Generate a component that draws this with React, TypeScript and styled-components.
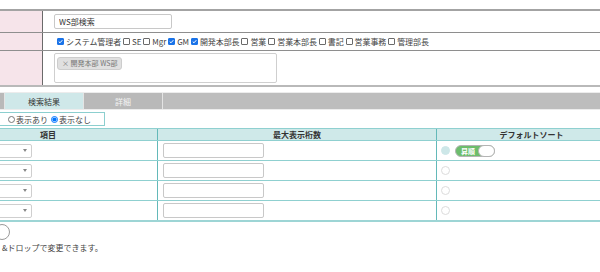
import React from 'react';
import styled, { createGlobalStyle } from 'styled-components';

const GlobalStyle = createGlobalStyle`
  html, body {
    margin: 0;
    padding: 0;
    background: #fff;
    overflow: hidden;
  }
  body {
    font-family: "Noto Sans CJK JP", "Noto Sans", sans-serif;
    font-size: 8px;
    color: #333;
  }
`

// the screenshot is scrolled sideways, so the page starts left of the window
const Canvas = styled.div`
    width: 687px;
    margin-left: -61px;
    padding-top: 9px;
`

const FormTable = styled.div`
    border-top: 2px solid #a3a3a3;
    border-bottom: 2px solid #b9b9b9;
`
const FormRow = styled.div<{ $h: number }>`
    display: grid;
    grid-template-columns: 104px 1fr;
    height: ${({ $h }) => $h}px;

    & + & {
        border-top: 1px solid #8e8e8e;
    }
`
const FormLabel = styled.div`
    background: #f6e4ea;
    border-right: 1px solid #6a6a6a;
`
const FormValue = styled.div`
    display: flex;
    align-items: center;
    padding-left: 11px;
`
const TextInput = styled.input<{ $w: number }>`
    box-sizing: border-box;
    width: ${({ $w }) => $w}px;
    height: 15px;
    border: 1px solid #c8c8c8;
    border-radius: 2px;
    padding: 0 4px;
    font: inherit;
    font-size: 8px;
    color: #333;
    background: #fff;
    outline: none;
`
const CheckList = styled.div`
    display: flex;
    align-items: center;
    padding-left: 3px;
    gap: 2px;
    line-height: 10px;
    letter-spacing: -0.1px;
`
const CheckItem = styled.span`
    display: inline-flex;
    align-items: center;
    gap: 2px;
    color: #444;
`
const CheckBox = styled.span<{ $on?: boolean }>`
    box-sizing: border-box;
    width: 7px;
    height: 7px;
    border-radius: 1px;
    border: 1px solid ${({ $on }) => ($on ? '#1a73e8' : '#6a6a6a')};
    background: ${({ $on }) => ($on ? '#1a73e8' : '#fff')};
    display: inline-flex;
    align-items: center;
    justify-content: center;

    svg {
        display: block;
    }
`
const TagBox = styled.div`
    box-sizing: border-box;
    width: 223px;
    height: 30px;
    border: 1px solid #cfcfcf;
    border-radius: 2px;
    padding: 3px 2px;
    align-self: center;
`
const Tag = styled.span`
    display: inline-block;
    height: 11px;
    line-height: 11px;
    padding: 0 4px;
    background: #e0e0e0;
    border: 1px solid #cdcdcd;
    border-radius: 3px;
    font-size: 7px;
    color: #777;
`

const TabBar = styled.div`
    display: flex;
    height: 16px;
    margin-top: 5px;
    background: #bdbdbd;
    border-top: 1px solid #ececec;
    border-bottom: 1px solid #ececec;
`
const Tab = styled.div<{ $active?: boolean; $w: number }>`
    width: ${({ $w }) => $w}px;
    border-right: 1px solid #e4e4e4;
    display: flex;
    align-items: center;
    justify-content: center;
    background: ${({ $active }) => ($active ? '#cfe8e9' : '#b9b9b9')};
    color: ${({ $active }) => ($active ? '#333' : '#f4f4f4')};
`

const RadioBox = styled.div`
    box-sizing: border-box;
    width: 166px;
    height: 14px;
    margin-top: 2px;
    padding-left: 68px;
    border: 1px solid #8ccfcf;
    display: flex;
    align-items: center;
    gap: 3px;
    color: #444;

    label {
        display: inline-flex;
        align-items: center;
        gap: 1px;
    }
    input {
        width: 7px;
        height: 7px;
        margin: 0;
    }
`

const Grid = styled.div`
    margin-top: 2px;
    border-top: 1px solid #8fd0d0;
    border-bottom: 2px solid #9dd5d5;
`
const GridRow = styled.div<{ $head?: boolean }>`
    display: grid;
    grid-template-columns: 218px 279px 1fr;
    height: ${({ $head }) => ($head ? 11 : 19)}px;
    background: ${({ $head }) => ($head ? '#cfe9e9' : '#fff')};
    font-weight: ${({ $head }) => ($head ? 'bold' : 'normal')};
    border-bottom: 1px solid #8fd0d0;

    &:last-child {
        border-bottom: none;
    }
`
const Cell = styled.div<{ $center?: boolean; $pad?: number }>`
    display: flex;
    align-items: center;
    justify-content: ${({ $center }) => ($center ? 'center' : 'flex-start')};
    padding-left: ${({ $pad }) => $pad || 0}px;
    gap: 5px;

    & + & {
        border-left: 1px solid #63b9b9;
    }
`
const SelectBox = styled.div`
    box-sizing: border-box;
    width: 85px;
    height: 14px;
    border: 1px solid #cfcfcf;
    border-radius: 2px;
    display: flex;
    align-items: center;
    justify-content: flex-end;
    padding-right: 4px;

    &::after {
        content: '';
        border-left: 2.5px solid transparent;
        border-right: 2.5px solid transparent;
        border-top: 3px solid #888;
    }
`
const SortRadio = styled.span<{ $on?: boolean }>`
    box-sizing: border-box;
    width: 9px;
    height: 9px;
    border-radius: 50%;
    background: ${({ $on }) => ($on ? '#cde7e8' : '#fff')};
    border: 1px solid ${({ $on }) => ($on ? '#cde7e8' : '#dcdcdc')};
`
const Toggle = styled.span`
    box-sizing: border-box;
    width: 40px;
    height: 12px;
    border-radius: 6px;
    border: 1px solid #b4b4b4;
    background: #6cbd6c;
    display: flex;
    align-items: center;
    color: #fff;
    font-size: 7px;
    font-weight: bold;
    padding-left: 5px;
    position: relative;

    &::after {
        content: '';
        position: absolute;
        right: -1px;
        top: -1px;
        width: 17px;
        height: 12px;
        box-sizing: border-box;
        border-radius: 6px;
        border: 1px solid #b4b4b4;
        background: #fff;
    }
`

const AddCircle = styled.div`
    width: 16px;
    height: 16px;
    box-sizing: border-box;
    margin: 2px 0 0 55px;
    border: 1.5px solid #9a9a9a;
    border-radius: 50%;
`
const Note = styled.div`
    margin-top: 3px;
    padding-left: 63px;
    line-height: 10px;
    color: #444;
`

const roles = [
    { name: 'システム管理者', on: true },
    { name: 'SE', on: false },
    { name: 'Mgr', on: false },
    { name: 'GM', on: true },
    { name: '開発本部長', on: true },
    { name: '営業', on: false },
    { name: '営業本部長', on: false },
    { name: '書記', on: false },
    { name: '営業事務', on: false },
    { name: '管理部長', on: false },
]

function App() {
    return (
        <>
            <GlobalStyle />
            <Canvas>
                <FormTable>
                    <FormRow $h={21}>
                        <FormLabel />
                        <FormValue>
                            <TextInput $w={118} defaultValue="WS部検索" />
                        </FormValue>
                    </FormRow>
                    <FormRow $h={17}>
                        <FormLabel />
                        <FormValue>
                            <CheckList>
                                {roles.map(r => (
                                    <CheckItem key={r.name}>
                                        <CheckBox $on={r.on}>
                                            {r.on && (
                                                <svg width="5" height="5" viewBox="0 0 10 10">
                                                    <path d="M1.5 5.2 L4 7.6 L8.6 2.4" fill="none" stroke="#fff" strokeWidth="2" />
                                                </svg>
                                            )}
                                        </CheckBox>
                                        {r.name}
                                    </CheckItem>
                                ))}
                            </CheckList>
                        </FormValue>
                    </FormRow>
                    <FormRow $h={34}>
                        <FormLabel />
                        <FormValue>
                            <TagBox>
                                <Tag>× 開発本部 WS部</Tag>
                            </TagBox>
                        </FormValue>
                    </FormRow>
                </FormTable>

                <TabBar>
                    <Tab $w={65} />
                    <Tab $w={78} $active>検索結果</Tab>
                    <Tab $w={78}>詳細</Tab>
                </TabBar>

                <RadioBox>
                    <label><input type="radio" name="disp" />表示あり</label>
                    <label><input type="radio" name="disp" defaultChecked />表示なし</label>
                </RadioBox>

                <Grid>
                    <GridRow $head>
                        <Cell $center>項目</Cell>
                        <Cell $center>最大表示桁数</Cell>
                        <Cell $center>デフォルトソート</Cell>
                    </GridRow>
                    {[0, 1, 2, 3].map(i => (
                        <GridRow key={i}>
                            <Cell $pad={8}><SelectBox /></Cell>
                            <Cell $pad={5}><TextInput $w={101} /></Cell>
                            <Cell $pad={4}>
                                <SortRadio $on={i === 0} />
                                {i === 0 && <Toggle>昇順</Toggle>}
                            </Cell>
                        </GridRow>
                    ))}
                </Grid>

                <AddCircle />
                <Note>&amp;ドロップで変更できます。</Note>
            </Canvas>
        </>
    )
}

export default App
